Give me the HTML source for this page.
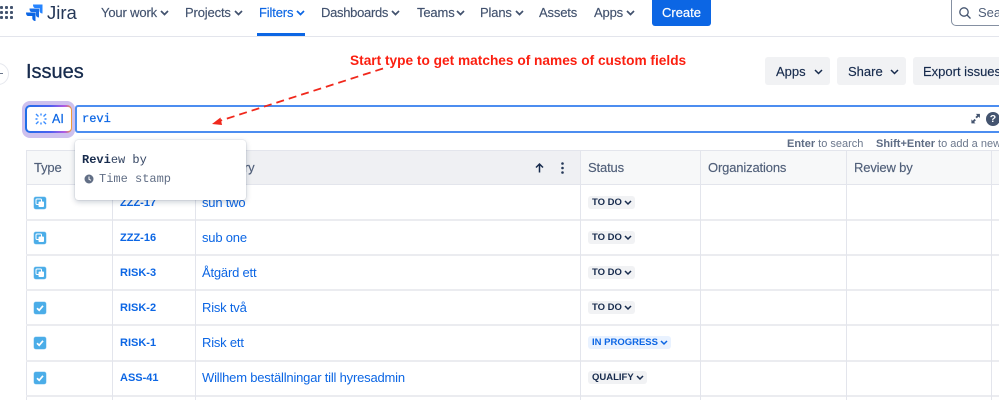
<!DOCTYPE html>
<html><head><meta charset="utf-8">
<style>
html,body{margin:0;padding:0;background:#fff;width:999px;height:400px;overflow:hidden}
#p{position:absolute;left:0;top:0;width:999px;height:400px;overflow:hidden;font-family:"Liberation Sans",sans-serif;color:#42526e}
.a{position:absolute;white-space:nowrap}
.nav{top:5px;font-size:13px;line-height:16px;color:#42526e;letter-spacing:-.15px;-webkit-text-stroke:.15px currentColor}
.chev{position:absolute;width:9px;height:6px}
.th{top:160px;font-size:13px;line-height:16px;color:#505f79;letter-spacing:-.15px;-webkit-text-stroke:.15px currentColor}
.key{font-size:11px;font-weight:bold;color:#0c66e4;line-height:14px}
.sum{font-size:13px;color:#0c66e4;line-height:16px;letter-spacing:-.2px}
.hl{position:absolute;height:1px;background:#e3e5ec;left:26px;width:973px}
.vl{position:absolute;width:1px;background:#e3e5ec;top:150px;height:250px}
.lz{position:absolute;height:13px;border-radius:3px;background:#f1f2f4;color:#172b4d;font-size:9.5px;font-weight:bold;line-height:14px;padding:0 4px;white-space:nowrap}
.btn{position:absolute;top:57px;height:28px;background:#f1f2f4;border-radius:3px;font-size:13px;line-height:29px;color:#172b4d;-webkit-text-stroke:.15px currentColor}
.ic{position:absolute;left:34px;width:12px;height:12px;background:#4bade8;border-radius:2px;box-shadow:0 0 0 .5px #a5d6f5}
</style></head><body><div id="p">

<!-- top nav -->
<svg class="a" style="left:0;top:3px" width="16" height="18"><g fill="#44546f"><rect x="0" y="3" width="3" height="3" rx="1"/><rect x="5" y="3" width="3" height="3" rx="1"/><rect x="10" y="3" width="3" height="3" rx="1"/><rect x="0" y="8" width="3" height="3" rx="1"/><rect x="5" y="8" width="3" height="3" rx="1"/><rect x="10" y="8" width="3" height="3" rx="1"/><rect x="0" y="13" width="3" height="3" rx="1"/><rect x="5" y="13" width="3" height="3" rx="1"/><rect x="10" y="13" width="3" height="3" rx="1"/></g></svg>
<svg class="a" style="left:26px;top:4px" width="17" height="17" viewBox="0 0 17 17"><path d="M7 0.500H16.500V9.500C14.500 9.500 13.500 8 13.500 6.500V4H9C7.800 4 7 2.500 7 0.500Z" fill="#2684ff"/><path d="M3.500 4.500H13V13.500C11 13.500 9.800 12 9.800 10.500V8H5.500C4.300 8 3.500 6.500 3.500 4.500Z" fill="#1a6fe8"/><path d="M0 8.500H9.500V17C7.500 17 6.300 15.800 6.300 14V12H2C0.800 12 0 10.500 0 8.500Z" fill="#0c66e4"/></svg>
<div class="a" style="left:47px;top:1px;font-size:18.500px;line-height:24px;color:#253858">Jira</div>

<div class="a nav" style="left:101px">Your work</div>
<svg class="chev" style="left:160px;top:10px"><path d="M1 1L4.500 4.500L8 1" fill="none" stroke="#42526e" stroke-width="1.700"/></svg>
<div class="a nav" style="left:185px">Projects</div>
<svg class="chev" style="left:234px;top:10px"><path d="M1 1L4.500 4.500L8 1" fill="none" stroke="#42526e" stroke-width="1.700"/></svg>
<div class="a nav" style="left:259px;color:#0c66e4">Filters</div>
<svg class="chev" style="left:296px;top:10px"><path d="M1 1L4.500 4.500L8 1" fill="none" stroke="#0c66e4" stroke-width="1.700"/></svg>
<div class="a" style="left:257px;top:33px;width:48px;height:3px;background:#0c66e4"></div>
<div class="a nav" style="left:321px;letter-spacing:-.3px">Dashboards</div>
<svg class="chev" style="left:391px;top:10px"><path d="M1 1L4.500 4.500L8 1" fill="none" stroke="#42526e" stroke-width="1.700"/></svg>
<div class="a nav" style="left:417px">Teams</div>
<svg class="chev" style="left:456px;top:10px"><path d="M1 1L4.500 4.500L8 1" fill="none" stroke="#42526e" stroke-width="1.700"/></svg>
<div class="a nav" style="left:480px">Plans</div>
<svg class="chev" style="left:515px;top:10px"><path d="M1 1L4.500 4.500L8 1" fill="none" stroke="#42526e" stroke-width="1.700"/></svg>
<div class="a nav" style="left:539px">Assets</div>
<div class="a nav" style="left:594px">Apps</div>
<svg class="chev" style="left:626px;top:10px"><path d="M1 1L4.500 4.500L8 1" fill="none" stroke="#42526e" stroke-width="1.700"/></svg>
<div class="a" style="left:652px;top:-4px;width:59px;height:30px;background:#0c66e4;border-radius:3px;color:#fff;font-size:13px;line-height:34px;text-align:center;-webkit-text-stroke:.2px #fff">Create</div>

<div class="a" style="left:951px;top:-4px;width:60px;height:28px;border:1px solid #8590a2;border-radius:5px;background:#fff"></div>
<svg class="a" style="left:958px;top:6px" width="14" height="14"><circle cx="6" cy="6" r="4.200" fill="none" stroke="#44546f" stroke-width="1.300"/><path d="M9 9L12.500 12.500" stroke="#44546f" stroke-width="1.300"/></svg>
<div class="a" style="left:978px;top:5px;font-size:13px;line-height:16px;color:#505f79">Sea</div>
<div class="a" style="left:0;top:36px;width:999px;height:1px;background:#e3e5ec"></div>

<!-- sidebar toggle -->
<div class="a" style="left:-13px;top:63px;width:22px;height:22px;border-radius:50%;background:#fff;border:1px solid #e6e8ee;box-sizing:border-box"></div>
<div class="a" style="left:0;top:73px;width:3px;height:1px;background:#6b778c"></div>

<!-- title -->
<div class="a" style="left:26px;top:59px;font-size:20px;line-height:26px;color:#172b4d;-webkit-text-stroke:.3px #172b4d">Issues</div>

<!-- annotation -->
<div class="a" style="left:350px;top:52px;font-size:13.700px;line-height:17px;font-weight:bold;color:#fb1f10">Start type to get matches of names of custom fields</div>

<!-- header buttons -->
<div class="btn" style="left:765px;width:65px"><span class="a" style="left:11px;top:0">Apps</span><svg class="chev" style="left:49px;top:12px"><path d="M1 1L4.500 4.500L8 1" fill="none" stroke="#172b4d" stroke-width="1.500"/></svg></div>
<div class="btn" style="left:837px;width:69px"><span class="a" style="left:11px;top:0">Share</span><svg class="chev" style="left:53px;top:12px"><path d="M1 1L4.500 4.500L8 1" fill="none" stroke="#172b4d" stroke-width="1.500"/></svg></div>
<div class="btn" style="left:913px;width:100px"><span class="a" style="left:10px;top:0">Export issues</span></div>

<!-- AI button -->
<div class="a" style="left:22px;top:101px;width:53px;height:37px;border-radius:8px;background:#cdc0ee"></div>
<div class="a" style="left:25px;top:105px;width:47px;height:28px;border-radius:5px;background:linear-gradient(90deg,#1d6fe8 0%,#4f5ff0 55%,#b45ce0 85%,#f0a030 100%)"></div>
<div class="a" style="left:27px;top:107px;width:44px;height:24px;border-radius:3px;background:#fff"></div>
<svg class="a" style="left:35px;top:113px" width="12" height="12"><g stroke="#388bff" stroke-width="1.400"><path d="M1 1L3.500 3.500M11 1L8.500 3.500M1 11L3.500 8.500M11 11L8.500 8.500M6 0.500V2.500M6 9.500V11.500M0.500 6H2.500M9.500 6H11.500"/></g></svg>
<div class="a" style="left:52px;top:111px;font-size:12.500px;line-height:16px;color:#0c66e4;-webkit-text-stroke:.2px #0c66e4">AI</div>

<!-- search input -->
<div class="a" style="left:75px;top:105px;width:940px;height:28px;border:2px solid #4c8df0;border-radius:3px;box-sizing:border-box;background:#fff"></div>
<div class="a" style="left:82px;top:112px;font:12px/15px 'Liberation Mono',monospace;color:#0c66e4;-webkit-text-stroke:.25px #0c66e4">revi</div>
<svg class="a" style="left:970px;top:113px" width="12" height="12"><g fill="#44546f"><path d="M6.500 1H11V5.500L9.500 4L7.500 6L6 4.500L8 2.500Z" transform="scale(.9)"/><path d="M1 6.500V11H5.500L4 9.500L6 7.500L4.500 6L2.500 8Z" transform="translate(.5,.5) scale(.9)"/></g></svg>
<div class="a" style="left:986px;top:112px;width:14px;height:14px;border-radius:50%;background:#44546f;color:#fff;font-size:10.500px;font-weight:bold;line-height:14px;text-align:center">?</div>

<div class="a" style="left:787px;top:137px;font-size:11px;line-height:14px;color:#6b778c"><b style="color:#5e6c84">Enter</b> to search</div>
<div class="a" style="left:876px;top:137px;font-size:11px;line-height:14px;color:#6b778c"><b style="color:#5e6c84">Shift+Enter</b> to add a new line</div>

<!-- table -->
<div class="a" style="left:26px;top:150px;width:973px;height:34px;background:#f7f8f9;border-radius:4px 0 0 0"></div>
<div class="a" style="left:196px;top:151px;width:384px;height:33px;background:#eff0f3"></div>
<div class="a" style="left:26px;top:150px;width:973px;height:1px;background:#e3e5ec"></div>
<div class="a" style="left:26px;top:150px;width:1px;height:250px;background:#e3e5ec"></div>
<div class="hl" style="top:184px"></div>
<div class="hl" style="top:219px;height:2px;background:#ebecf0"></div>
<div class="hl" style="top:254px;height:2px;background:#ebecf0"></div>
<div class="hl" style="top:289px;height:2px;background:#ebecf0"></div>
<div class="hl" style="top:324px;height:2px;background:#ebecf0"></div>
<div class="hl" style="top:360px;height:2px;background:#ebecf0"></div>
<div class="hl" style="top:395px;height:2px;background:#ebecf0"></div>
<div class="vl" style="left:112px"></div>
<div class="vl" style="left:195px"></div>
<div class="vl" style="left:580px"></div>
<div class="vl" style="left:700px"></div>
<div class="vl" style="left:846px"></div>
<div class="vl" style="left:991px"></div>

<div class="a th" style="left:34px">Type</div>
<div class="a th" style="left:244px">ry</div>
<div class="a th" style="left:588px">Status</div>
<div class="a th" style="left:708px">Organizations</div>
<div class="a th" style="left:854px">Review by</div>
<svg class="a" style="left:534px;top:162px" width="12" height="12"><path d="M5.500 10.500V2M2 5.500L5.500 2L9 5.500" fill="none" stroke="#172b4d" stroke-width="1.500"/></svg>
<svg class="a" style="left:560px;top:161px" width="5" height="14"><g fill="#253858"><circle cx="2.500" cy="2.500" r="1.300"/><circle cx="2.500" cy="7" r="1.300"/><circle cx="2.500" cy="11.500" r="1.300"/></g></svg>

<!-- rows -->
<div class="ic" style="top:197px"><svg width="12" height="12" style="display:block"><rect x="2" y="2" width="5.500" height="5.500" rx="1" fill="none" stroke="#fff" stroke-width="1"/><rect x="4.500" y="4.500" width="5.500" height="5.500" rx="1" fill="#fff"/></svg></div>
<div class="ic" style="top:232px"><svg width="12" height="12" style="display:block"><rect x="2" y="2" width="5.500" height="5.500" rx="1" fill="none" stroke="#fff" stroke-width="1"/><rect x="4.500" y="4.500" width="5.500" height="5.500" rx="1" fill="#fff"/></svg></div>
<div class="ic" style="top:267px"><svg width="12" height="12" style="display:block"><rect x="2" y="2" width="5.500" height="5.500" rx="1" fill="none" stroke="#fff" stroke-width="1"/><rect x="4.500" y="4.500" width="5.500" height="5.500" rx="1" fill="#fff"/></svg></div>
<div class="ic" style="top:302px"><svg width="12" height="12" style="display:block"><path d="M3 6.200L5.200 8.300L9 3.800" fill="none" stroke="#fff" stroke-width="1.700"/></svg></div>
<div class="ic" style="top:337px"><svg width="12" height="12" style="display:block"><path d="M3 6.200L5.200 8.300L9 3.800" fill="none" stroke="#fff" stroke-width="1.700"/></svg></div>
<div class="ic" style="top:372px"><svg width="12" height="12" style="display:block"><path d="M3 6.200L5.200 8.300L9 3.800" fill="none" stroke="#fff" stroke-width="1.700"/></svg></div>

<div class="a key" style="left:120px;top:196px">ZZZ-17</div>
<div class="a key" style="left:120px;top:231px">ZZZ-16</div>
<div class="a key" style="left:120px;top:266px">RISK-3</div>
<div class="a key" style="left:120px;top:301px">RISK-2</div>
<div class="a key" style="left:120px;top:336px">RISK-1</div>
<div class="a key" style="left:120px;top:371px">ASS-41</div>

<div class="a sum" style="left:202px;top:195px">sun two</div>
<div class="a sum" style="left:202px;top:230px">sub one</div>
<div class="a sum" style="left:202px;top:265px">Åtgärd ett</div>
<div class="a sum" style="left:202px;top:300px">Risk två</div>
<div class="a sum" style="left:202px;top:335px">Risk ett</div>
<div class="a sum" style="left:202px;top:370px">Willhem beställningar till hyresadmin</div>

<div class="lz" style="left:588px;top:196px;width:39px">TO DO<svg class="chev" style="left:36px;top:4px;width:8px"><path d="M1 1L4 4L7 1" fill="none" stroke="#172b4d" stroke-width="1.500"/></svg></div>
<div class="lz" style="left:588px;top:231px;width:39px">TO DO<svg class="chev" style="left:36px;top:4px;width:8px"><path d="M1 1L4 4L7 1" fill="none" stroke="#172b4d" stroke-width="1.500"/></svg></div>
<div class="lz" style="left:588px;top:266px;width:39px">TO DO<svg class="chev" style="left:36px;top:4px;width:8px"><path d="M1 1L4 4L7 1" fill="none" stroke="#172b4d" stroke-width="1.500"/></svg></div>
<div class="lz" style="left:588px;top:301px;width:39px">TO DO<svg class="chev" style="left:36px;top:4px;width:8px"><path d="M1 1L4 4L7 1" fill="none" stroke="#172b4d" stroke-width="1.500"/></svg></div>
<div class="lz" style="left:588px;top:336px;width:75px;background:#e9f2ff;color:#0c66e4">IN PROGRESS<svg class="chev" style="left:72px;top:4px;width:8px"><path d="M1 1L4 4L7 1" fill="none" stroke="#0c66e4" stroke-width="1.500"/></svg></div>
<div class="lz" style="left:588px;top:371px;width:51px">QUALIFY<svg class="chev" style="left:48px;top:4px;width:8px"><path d="M1 1L4 4L7 1" fill="none" stroke="#172b4d" stroke-width="1.500"/></svg></div>

<!-- dropdown -->
<div class="a" style="left:75px;top:140px;width:171px;height:60px;background:#fff;border-radius:3px;box-shadow:0 2px 6px rgba(9,30,66,.22),0 0 1px rgba(9,30,66,.3)"></div>
<div class="a" style="left:82px;top:153px;font:12px/15px 'Liberation Mono',monospace;color:#172b4d"><b>Revi</b><span style="color:#344563">ew by</span></div>
<svg class="a" style="left:84px;top:174px" width="10" height="10"><circle cx="5" cy="5" r="4.500" fill="#626f86"/><path d="M5 2.500V5.300L7 6.300" fill="none" stroke="#fff" stroke-width="1"/></svg>
<div class="a" style="left:99px;top:172px;font:12px/15px 'Liberation Mono',monospace;color:#626f86">Time stamp</div>

<!-- annotation arrow, above the input -->
<svg class="a" style="left:205px;top:60px" width="190" height="70"><path d="M178 8.500L16 60.500" fill="none" stroke="#f0281c" stroke-width="1.800" stroke-dasharray="8 5"/><path d="M7 64L15.500 57.500L17 65Z" fill="#f0281c"/></svg>

</div></body></html>
